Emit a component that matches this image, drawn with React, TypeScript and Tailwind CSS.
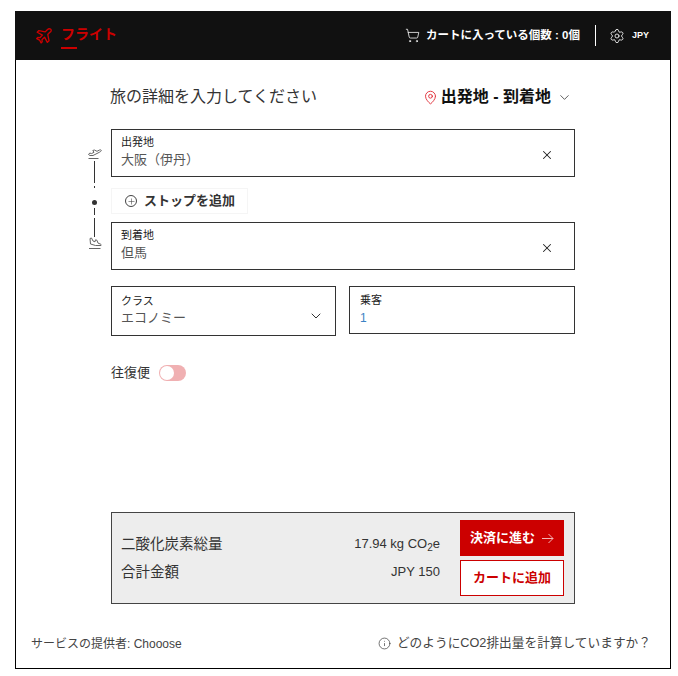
import { ChevronDown, Info, MapPin, Plus, Settings, ShoppingCart, X } from "lucide-react";

const FONT = "font-['Liberation_Sans','Noto_Sans_CJK_JP',sans-serif]";

function PlaneOutline() {
  return (
    <svg width="18" height="18" viewBox="0 0 24 24" fill="none" stroke="#cc0000" strokeWidth="1.8" strokeLinejoin="round">
      <path d="M21 3c-1.300-1.100-3.300-.6-4.600.7l-2.800 2.800-8.400-1.700-2.200 2.200 6.900 3.800-3.400 3.400-2.700-.3-1.500 1.500 3.800 2 2 3.800 1.500-1.500-.3-2.700 3.400-3.400 3.800 6.900 2.200-2.200-1.700-8.400 2.800-2.800C21.700 6.300 22.100 4.100 21 3z" />
    </svg>
  );
}

function TakeoffIcon() {
  return (
    <svg width="16" height="12" viewBox="0 0 16 12" fill="none" stroke="#666" strokeWidth="1" className="ml-[2px]">
      <path d="M1.500 6.500 2.800 5l1.700.6 2.500-1.300L5.800 2.500l1.500-.5 2.700 1.300 2.500-1.300c1-.4 2 0 1.800.7-.2.600-1 1.100-2 1.600L6 7.500H3z" />
      <path d="M1.500 10.500h10" />
    </svg>
  );
}

function LandingIcon() {
  return (
    <svg width="16" height="13" viewBox="0 0 16 13" fill="none" stroke="#666" strokeWidth="1" className="ml-[2px]">
      <path d="M3 1.500 4.500 1l1.500 3 2 .8.500-2 1.500.5 1 2.800 2.500 1c.8.400 1 1.200.5 1.400H8.500L3.500 7z" />
      <path d="M2 11.500h11.500" />
    </svg>
  );
}

function RouteLine() {
  return (
    <div className="-ml-[5px] w-[22px] mr-[6px] flex flex-col items-center self-stretch pt-[19px]">
      <TakeoffIcon />
      <div className="w-px h-[22px] bg-[#333] mt-[1px]" />
      <div className="w-px h-[2px] bg-[#333] mt-[3px]" />
      <div className="w-[5px] h-[5px] rounded-full bg-[#333] mt-[12px]" />
      <div className="w-px h-[7px] bg-[#333] mt-[3px]" />
      <div className="w-px h-[19px] bg-[#333] mt-[3px]" />
      <LandingIcon />
    </div>
  );
}

function LocationField({ label, value }: { label: string; value: string }) {
  return (
    <div className="h-12 border border-[#333] pl-[9px] pr-[20px] flex items-center justify-between">
      <div className="flex flex-col pb-[3px]">
        <span className="text-[11px] leading-[15px] text-[#222]">{label}</span>
        <span className="text-[13px] leading-[19px] text-[#555]">{value}</span>
      </div>
      <X size={14} strokeWidth={1.75} className="text-[#222] mt-[3px]" />
    </div>
  );
}

export default function App() {
  return (
    <div className={`${FONT} w-[678px] h-[676px] bg-white pt-[11px] pl-[15px]`}>
      <div className="w-[656px] h-[658px] border border-black flex flex-col">
        {/* top bar */}
        <header className="-mx-px -mt-px h-[49px] bg-[#111] flex items-center justify-between pl-[20px] pr-[22px] shrink-0">
          <div className="flex items-center gap-[8px]">
            <PlaneOutline />
            <div className="relative -mt-[3px]">
              <span className="text-[14px] font-bold text-[#cc0000]">フライト</span>
              <div className="absolute left-0 -bottom-[3px] w-[16px] h-[2px] bg-[#cc0000]" />
            </div>
          </div>
          <div className="flex items-center text-white">
            <ShoppingCart size={15} strokeWidth={1.25} />
            <span className="ml-[6px] text-[11.5px] font-bold">カートに入っている個数 : 0個</span>
            <div className="w-px h-[21px] bg-white ml-[15px]" />
            <Settings size={16} strokeWidth={1.25} className="ml-[13px]" />
            <span className="ml-[7px] text-[9px] font-bold">JPY</span>
          </div>
        </header>

        {/* booking form */}
        <main className="flex-1 flex flex-col pl-[72px] pr-[95px]">
          <div className="flex items-center justify-between pl-[22px] pt-[5px] h-[69px] shrink-0">
            <h1 className="text-[16px] text-[#333]">旅の詳細を入力してください</h1>
            <div className="flex items-center pr-[3px]">
              <MapPin size={15} strokeWidth={1.5} className="text-[#e0303a]" />
              <span className="ml-[3px] text-[16px] font-bold text-[#111]">出発地 - 到着地</span>
              <ChevronDown size={15} strokeWidth={1.25} className="ml-[6px] text-[#333]" />
            </div>
          </div>

          <div className="flex">
            <RouteLine />
            <div className="flex-1 flex flex-col">
              <LocationField label="出発地" value="大阪（伊丹）" />
              <div className="mt-[11px] mb-[8px] w-[137px] h-[26px] border border-[#f5f5f5] flex items-center pl-[13px]">
                <span className="w-[12px] h-[12px] rounded-full border border-[#444] flex items-center justify-center">
                  <Plus size={9} strokeWidth={1.5} className="text-[#444]" />
                </span>
                <span className="ml-[7px] text-[13px] font-bold text-[#333]">ストップを追加</span>
              </div>
              <LocationField label="到着地" value="但馬" />
            </div>
          </div>

          <div className="flex gap-[13px] mt-4 ml-[23px]">
            <div className="w-[225px] h-[50px] border border-[#333] pl-[9px] pr-[11px] flex items-center justify-between">
              <div className="flex flex-col pb-[2px]">
                <span className="text-[11px] leading-[15px] text-[#222]">クラス</span>
                <span className="text-[13px] leading-[18px] text-[#555]">エコノミー</span>
              </div>
              <ChevronDown size={16} strokeWidth={1.5} className="text-[#333] mt-[9px]" />
            </div>
            <div className="flex-1 h-[48px] border border-[#333] pl-[10px] flex flex-col">
              <span className="text-[11px] leading-[15px] text-[#222] mt-[6px]">乗客</span>
              <span className="text-[12px] leading-[19px] text-[#3b82c4] mt-[1px]">1</span>
            </div>
          </div>

          <div className="flex items-center h-[20px] ml-[23px] mt-[27px]">
            <span className="text-[13px] leading-[20px] text-[#333]">往復便</span>
            <div className="ml-[9px] w-[27px] h-[16px] rounded-full bg-[#f0b0b2] pl-px flex items-center">
              <div className="w-[14px] h-[14px] rounded-full bg-white" />
            </div>
          </div>

          {/* totals */}
          <div className="ml-[23px] mt-[129px] h-[92px] bg-[#ededed] border border-[#444] pl-[9px] pr-[10px] flex items-center justify-between">
            <div className="flex flex-col gap-[8px] text-[14.5px] text-[#333]">
              <span className="leading-[20px]">二酸化炭素総量</span>
              <span className="leading-[20px]">合計金額</span>
            </div>
            <div className="flex items-center gap-[20px]">
              <div className="flex flex-col items-end gap-[8px] text-[13px] text-[#333]">
                <span className="leading-[20px]">
                  17.94 kg CO<sub className="text-[10px]">2</sub>e
                </span>
                <span className="leading-[20px]">JPY 150</span>
              </div>
              <div className="flex flex-col gap-1">
                <button className="w-[104px] h-9 bg-[#cc0000] text-white text-[13px] font-bold flex items-center justify-center gap-[6px]">
                  決済に進む
                  <svg width="13" height="11" viewBox="0 0 13 11" fill="none" stroke="#f3b5b5" strokeWidth="1">
                    <path d="M1 5.500h11M7.500 1 12 5.500 7.500 10" />
                  </svg>
                </button>
                <button className="w-[104px] h-9 bg-white border border-[#cc0000] text-[#cc0000] text-[13px] font-bold">
                  カートに追加
                </button>
              </div>
            </div>
          </div>
        </main>

        <footer className="h-[64px] shrink-0 flex items-center justify-between pl-[15px] pr-[19px] pt-[16px] text-[12px] text-[#444]">
          <span>
            サービスの提供者: <span className="text-[12px]">Chooose</span>
          </span>
          <div className="flex items-center gap-[6px] text-[12.7px]">
            <Info size={13} strokeWidth={1.25} className="text-[#333]" />
            <span>どのようにCO2排出量を計算していますか？</span>
          </div>
        </footer>
      </div>
    </div>
  );
}
